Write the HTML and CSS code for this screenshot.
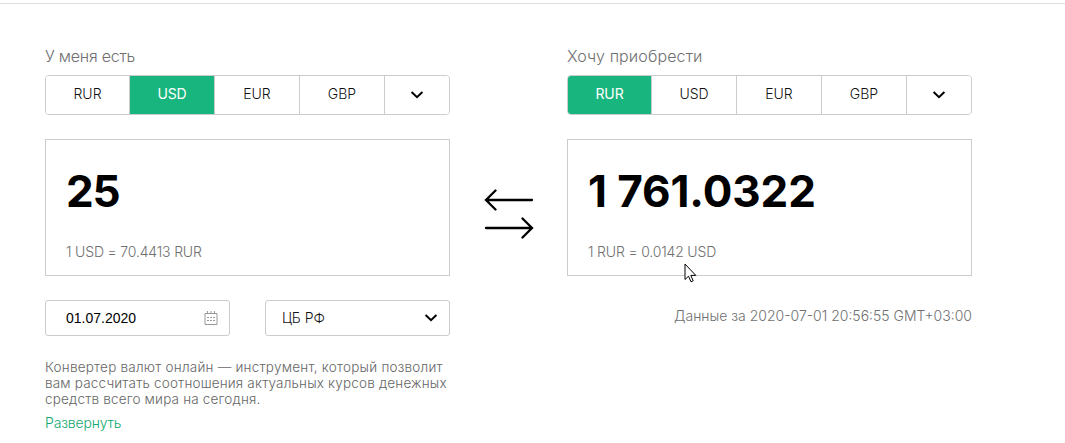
FILE: index.html
```html
<!DOCTYPE html>
<html lang="ru">
<head>
    <meta charset="UTF-8">
    <meta name="viewport" content="width=device-width, initial-scale=1.0">
    <title>Конвертер валют</title>
    <link rel="stylesheet" href="styles.css">
</head>
<body>
    <div class="converter">
        <div class="column">
            <div class="label label-have">У меня есть</div>
            <div class="tabs">
                <button class="tab">RUR</button>
                <button class="tab active">USD</button>
                <button class="tab">EUR</button>
                <button class="tab">GBP</button>
                <button class="tab more">
                    <svg width="14" height="10" viewBox="0 0 14 10"><path d="M1.6 2 L7 7.2 L12.4 2"/></svg>
                </button>
            </div>
            <div class="amount-box">
                <div class="amount">25</div>
                <div class="rate">1 USD = 70.4413 RUR</div>
            </div>
            <div class="options">
                <div class="field date">
                    <span>01.07.2020</span>
                    <svg class="calendar" width="14" height="14" viewBox="0 0 14 14">
                        <path d="M1 2.5H13V13.5H1Z M3.5 0V3 M7 0V3 M10.5 0V3"/>
                        <path d="M3 6.5H11 M3 9.5H11" stroke-dasharray="2 1"/>
                    </svg>
                </div>
                <div class="field bank">
                    <span>ЦБ РФ</span>
                    <svg width="14" height="10" viewBox="0 0 14 10"><path d="M1.6 2 L7 7.2 L12.4 2"/></svg>
                </div>
            </div>
            <p class="about"><span class="first">Конвертер валют онлайн — инструмент, который позволит</span><br>
                вам рассчитать соотношения актуальных курсов денежных<br>
                средств всего мира на сегодня.</p>
            <a class="expand">Развернуть</a>
        </div>
        <div class="swap">
            <svg width="50" height="54" viewBox="0 0 50 54">
                <path d="M2 14H48 M11.5 4.5L2 14L11.5 23.5"/>
                <path d="M2 42H48 M38.5 32.5L48 42L38.5 51.5"/>
            </svg>
        </div>
        <div class="column">
            <div class="label label-want">Хочу приобрести</div>
            <div class="tabs">
                <button class="tab active">RUR</button>
                <button class="tab">USD</button>
                <button class="tab">EUR</button>
                <button class="tab">GBP</button>
                <button class="tab more">
                    <svg width="14" height="10" viewBox="0 0 14 10"><path d="M1.6 2 L7 7.2 L12.4 2"/></svg>
                </button>
            </div>
            <div class="amount-box">
                <div class="amount result">1 761.0322</div>
                <div class="rate">1 RUR = 0.0142 USD</div>
                <svg class="cursor" width="13" height="20" viewBox="0 0 13 20">
                    <path d="M1 1V16.5L4.5 13.2L7 18.8L9.2 17.8L6.8 12.4H11.8Z"/>
                </svg>
            </div>
            <div class="updated">Данные за 2020-07-01 20:56:55 GMT+03:00</div>
        </div>
    </div>
</body>
</html>
```

FILE: styles.css
```css
* {
    box-sizing: border-box;
}
body {
    margin: 0;
    padding-top: 3px;
    background-color: white;
    color: black;
    font-family: Inter, "Liberation Sans", sans-serif;
    font-size: 14px;
    font-weight: 300;
    overflow: hidden;
}
svg {
    display: block;
    fill: none;
    stroke: black;
    stroke-width: 2;
}
.converter {
    display: flex;
    border-top: 1px solid #ddd;
    padding: 42px 93px 0 45px;
}
.column {
    width: 405px;
}
.label {
    height: 29px;
    line-height: 21px;
    font-size: 16px;
    color: #707070;
}
.label-have {
    letter-spacing: -0.22px;
}
.label-want {
    letter-spacing: 0.12px;
}
.tabs {
    display: flex;
    height: 40px;
    border: 1px solid #ccc;
    border-radius: 4px;
    overflow: hidden;
}
.tab {
    width: 85px;
    padding: 0 0 3px;
    border: 0;
    border-right: 1px solid #ccc;
    background-color: white;
    color: #111;
    font-family: inherit;
    font-size: 14px;
    font-weight: 300;
}
.tab:first-child {
    width: 84px;
}
.tab.active {
    background-color: #19b57e;
    color: white;
    font-weight: 400;
    letter-spacing: -0.1px;
}
.tab.more {
    display: flex;
    flex: 1;
    justify-content: center;
    align-items: center;
    border-right: 0;
    padding: 0;
}
.amount-box {
    position: relative;
    height: 137px;
    margin-top: 24px;
    padding: 26px 20px 0;
    border: 1px solid #ccc;
}
.amount {
    height: 50px;
    line-height: 50px;
    font-size: 44px;
    font-weight: 650;
    letter-spacing: -1.3px;
}
.result {
    letter-spacing: -0.1px;
}
.rate {
    margin-top: 27px;
    line-height: 18px;
    letter-spacing: -0.17px;
    color: #707070;
}
.cursor {
    position: absolute;
    left: 116px;
    top: 123px;
    fill: white;
    stroke-width: 1;
}
.options {
    display: flex;
    justify-content: space-between;
    margin-top: 24px;
}
.field {
    display: flex;
    justify-content: space-between;
    align-items: center;
    width: 185px;
    height: 36px;
    border: 1px solid #ccc;
    border-radius: 3px;
}
.date {
    padding: 0 11px 0 20px;
    font-family: "Liberation Sans", sans-serif;
}
.bank {
    padding: 0 11px 0 16px;
    color: #111;
}
.bank span {
    padding-bottom: 1px;
}
.calendar {
    stroke: #999;
    stroke-width: 1;
}
.about {
    margin: 23px 0 0;
    line-height: 16px;
    font-size: 13.5px;
    letter-spacing: 0.18px;
    white-space: nowrap;
    color: #666;
}
.first {
    letter-spacing: 0.23px;
}
.expand {
    display: block;
    margin-top: 8px;
    line-height: 16px;
    letter-spacing: -0.15px;
    color: #0fa870;
}
.swap {
    width: 117px;
    padding: 140px 0 0 34px;
}
.swap svg {
    stroke-width: 2.3;
    stroke-linecap: round;
}
.updated {
    margin-top: 31px;
    line-height: 18px;
    text-align: right;
    color: #707070;
}
```
